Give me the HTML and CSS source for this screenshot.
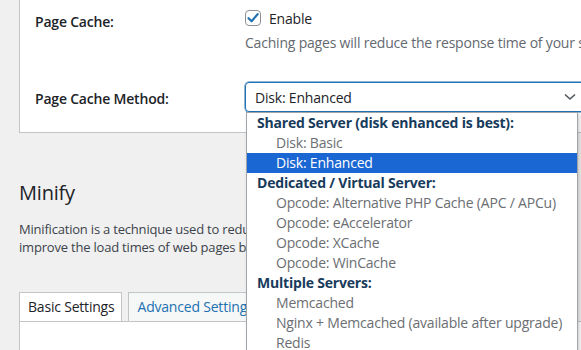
FILE: index.html
```html
<!DOCTYPE html>
<html lang="en">
<head>
	<meta charset="UTF-8">
	<title>Page Cache</title>
	<link rel="stylesheet" href="styles.css">
</head>
<body>
	<div class="wrap">
		<div class="panel">
			<div class="form-row">
				<div class="form-label">Page Cache:</div>
				<div class="form-field">
					<label class="check">
						<span class="check-box">
							<svg width="14" height="14" viewBox="0 0 14 14"><path d="M2.5 7.2 L5.6 10.2 L11.6 3.2" fill="none" stroke="#2271b1" stroke-width="2.2" stroke-linecap="round" stroke-linejoin="round"/></svg>
						</span>
						Enable
					</label>
					<p class="desc">Caching pages will reduce the response time of your site and increase the scale of your web server.</p>
				</div>
			</div>
			<div class="form-row row-method">
				<div class="form-label">Page Cache Method:</div>
				<div class="form-field">
					<div class="select">
						<span>Disk: Enhanced</span>
						<svg class="chevron" width="12" height="8" viewBox="0 0 12 8"><path d="M1 1.5 L6 6 L11 1.5" fill="none" stroke="#50575e" stroke-width="1.6"/></svg>
					</div>
					<ul class="dropdown">
						<li class="group">Shared Server (disk enhanced is best):</li>
						<li class="option">Disk: Basic</li>
						<li class="option selected">Disk: Enhanced</li>
						<li class="group">Dedicated / Virtual Server:</li>
						<li class="option">Opcode: Alternative PHP Cache (APC / APCu)</li>
						<li class="option">Opcode: eAccelerator</li>
						<li class="option">Opcode: XCache</li>
						<li class="option">Opcode: WinCache</li>
						<li class="group">Multiple Servers:</li>
						<li class="option">Memcached</li>
						<li class="option">Nginx + Memcached (available after upgrade)</li>
						<li class="option">Redis</li>
					</ul>
				</div>
			</div>
		</div>

		<h2 class="title">Minify</h2>
		<p class="intro">Minification is a technique used to reduce the file size of HTML, CSS and JS assets in order to<br>improve the load times of web pages by removing unnecessary characters.</p>

		<div class="tabs">
			<span class="tab active">Basic Settings</span>
			<span class="tab">Advanced Settings</span>
		</div>
		<div class="tab-body"></div>
	</div>
</body>
</html>
```

FILE: styles.css
```css
body {
	margin: 0;
	background-color: #f0f0f1;
	font-family: "Segoe UI", "Open Sans", sans-serif;
	font-size: 14px;
	letter-spacing: -0.2px;
	color: #1d2327;
	overflow: hidden;
	height: 350px;
}
.wrap {
	padding-left: 19px;
	width: 900px;
}
.panel {
	background-color: #fff;
	border: 1px solid #c3c4c7;
	border-top: none;
	padding: 0 15px 20px 15px;
}
.form-row {
	display: grid;
	grid-template-columns: 210px 1fr;
}
.form-label {
	font-weight: 600;
	font-size: 14px;
	padding-top: 12px;
}
.row-method {
	margin-top: 29px;
}
.row-method .form-label {
	padding-top: 7px;
}
.check {
	display: flex;
	align-items: center;
	gap: 8px;
	height: 18px;
	margin-top: 9px;
}
.check-box {
	display: flex;
	align-items: center;
	justify-content: center;
	width: 14px;
	height: 14px;
	border: 1px solid #8c8f94;
	border-radius: 4px;
}
.desc {
	margin: 6px 0 0 0;
	color: #646970;
	white-space: nowrap;
	line-height: 20px;
}
.form-field {
	position: relative;
}
.select {
	display: flex;
	align-items: center;
	justify-content: space-between;
	width: 322px;
	height: 28px;
	padding: 0 9px;
	border: 1px solid #2271b1;
	border-radius: 4px;
	box-shadow: 0 0 0 0.5px #2271b1;
}
.chevron {
	margin-right: 1px;
}
.dropdown {
	position: absolute;
	top: 30px;
	left: 1px;
	width: 330px;
	margin: 0;
	padding: 0;
	list-style: none;
	background-color: #fff;
	border: 1px solid #a0a5aa;
	box-shadow: 2px 2px 4px rgba(0, 0, 0, 0.18);
	z-index: 10;
}
.dropdown li {
	height: 20px;
	line-height: 20px;
	white-space: nowrap;
}
.dropdown .group {
	font-weight: 700;
	color: #173b5b;
	padding-left: 10px;
}
.dropdown .option {
	color: #6b6e72;
	padding-left: 29px;
}
.dropdown .selected {
	background-color: #1a66d2;
	color: #fff;
}
.title {
	margin: 47px 0 0 0;
	font-size: 20px;
	font-weight: 400;
	line-height: 26px;
}
.intro {
	margin: 14px 0 0 0;
	font-size: 13px;
	line-height: 18px;
	color: #3c434a;
	white-space: nowrap;
}
.tabs {
	display: flex;
	gap: 6px;
	margin-top: 36px;
}
.tab {
	display: block;
	height: 28px;
	line-height: 28px;
	padding: 0 7px 0 8px;
	border: 1px solid #c3c4c7;
	border-bottom: none;
	background-color: #f6f7f7;
	color: #2271b1;
	font-size: 14px;
}
.tab.active {
	background-color: #fff;
	color: #1d2327;
}
.tab-body {
	height: 60px;
	background-color: #fff;
	border: 1px solid #c3c4c7;
}
```
